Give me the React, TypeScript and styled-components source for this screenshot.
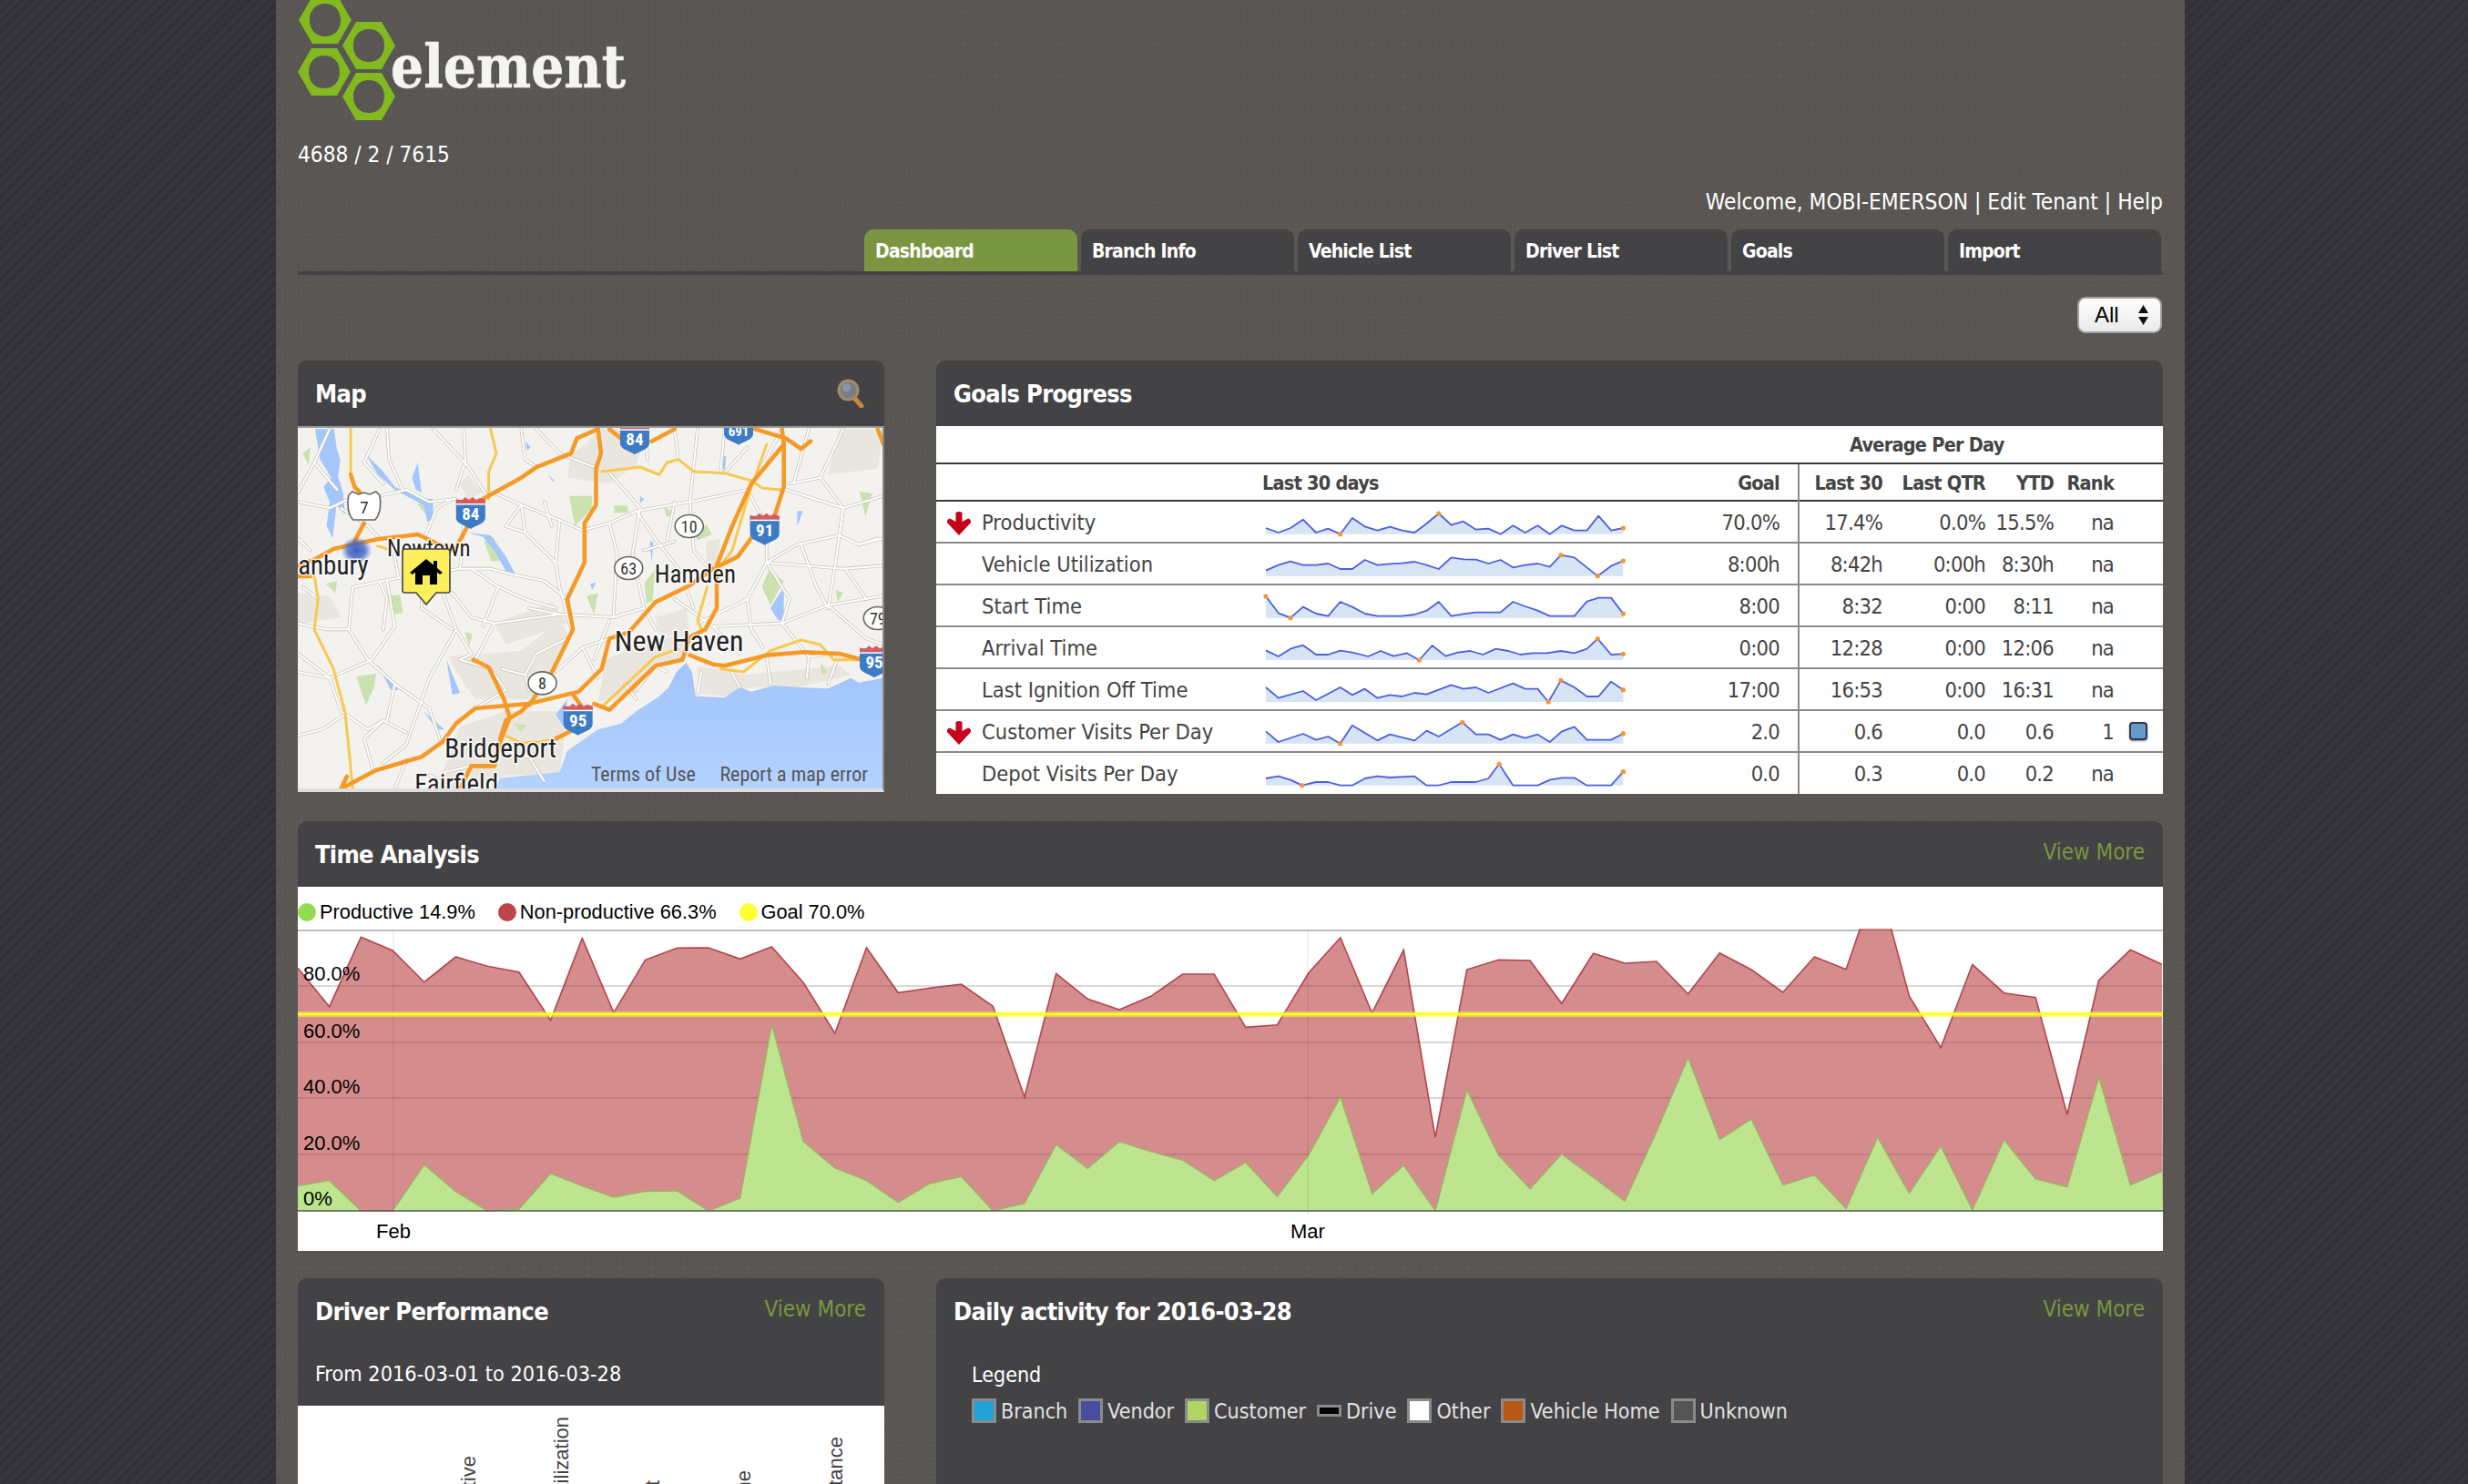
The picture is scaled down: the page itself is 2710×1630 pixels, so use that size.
import React from "react";
import styled, { createGlobalStyle } from "styled-components";

const UI = `"DejaVu Sans Condensed", "DejaVu Sans", sans-serif`;
const ARIAL = `"Liberation Sans", Arial, sans-serif`;

const Global = createGlobalStyle`
  html, body { margin: 0; padding: 0; height: 1630px; overflow: hidden; background: #35333b; }
  #root { height: 1630px; }
  * { box-sizing: border-box; }
`;

const Page = styled.div`
  width: 2710px;
  height: 1630px;
  overflow: hidden;
  font-family: ${UI};
  font-stretch: condensed;
  background-color: #35333b;
  background-image: repeating-linear-gradient(135deg, #312f37 0 3px, #36343c 3px 8px);
`;
const Column = styled.div`
  width: 2096px;
  height: 1630px;
  margin-left: 303px;
  padding: 0 24px;
  background-color: #595653;
  background-image:
    radial-gradient(rgba(255,255,255,.025) 1px, transparent 1px),
    radial-gradient(rgba(0,0,0,.05) 1px, transparent 1px);
  background-size: 5px 5px, 7px 7px;
  overflow: hidden;
`;
const Logo = styled.svg`
  display: block;
  width: 361px;
  height: 132px;
`;
const IdLine = styled.div`
  margin-top: 23px;
  height: 30px;
  line-height: 30px;
  font-size: 24.2px;
  color: #fff;
`;
const Welcome = styled.div`
  margin-top: 22px;
  height: 30px;
  line-height: 30px;
  font-size: 24.3px;
  color: #fff;
  text-align: right;
`;
const Tabs = styled.nav`
  margin-top: 15px;
  height: 50px;
  display: flex;
  justify-content: flex-end;
  gap: 4px;
  padding-right: 2px;
  border-bottom: 4px solid #434244;
`;
const Tab = styled.div<{ $active?: boolean }>`
  width: 234px;
  height: 46px;
  padding-left: 12px;
  line-height: 49px;
  border-radius: 10px 10px 0 0;
  font-size: 21px;
  letter-spacing: -0.8px;
  font-weight: 700;
  color: #fff;
  background: ${(p) => (p.$active ? "#7a9640" : "#434244")};
`;
const SelectRow = styled.div`
  margin-top: 24px;
  display: flex;
  justify-content: flex-end;
  padding-right: 1px;
`;
const SelectBox = styled.div`
  width: 93px;
  height: 40px;
  display: flex;
  align-items: center;
  justify-content: space-between;
  padding: 0 12px 0 17px;
  border: 2px solid #a2a2a2;
  border-radius: 9px;
  background: linear-gradient(#ffffff, #e9e9e9);
  font-family: ${ARIAL};
  font-size: 24px;
  color: #000;
`;
const Arrows = styled.svg`
  width: 13px;
  height: 24px;
`;
const Split = styled.div<{ $top?: number }>`
  margin-top: ${(p) => p.$top ?? 30}px;
  display: flex;
  align-items: flex-start;
  gap: 57px;
`;
const Panel = styled.section<{ $width?: number }>`
  ${(p) => (p.$width ? `width:${p.$width}px;flex:none;` : "flex:1;min-width:0;")}
  border-radius: 10px 10px 0 0;
  background: #434244;
  overflow: hidden;
`;
const Head = styled.header`
  height: 72px;
  padding: 0 20px;
  display: flex;
  align-items: center;
  justify-content: space-between;
`;
const Title = styled.h2`
  margin: 0 0 0 -1px;
  font-size: 27px;
  letter-spacing: -0.7px;
  font-weight: 700;
  color: #fff;
`;
const ViewMore = styled.a`
  margin-top: -5px;
  font-size: 24px;
  color: #7a9640;
`;
const MapFrame = styled.div`
  height: 402px;
  border-top: 2px solid #999;
  border-right: 2px solid #8a8a8a;
  border-bottom: 4px solid #dedede;
  background: #f3f1ee;
`;
const MapSvg = styled.svg`
  display: block;
  width: 642px;
  height: 396px;
`;
const LensIcon = styled.svg`
  width: 30px;
  height: 32px;
  margin-right: 2px;
`;
const Table = styled.div`
  background: #fff;
  color: #444;
  font-size: 23.5px;
`;
const CapRow = styled.div`
  height: 42px;
  border-bottom: 2px solid #3a3a3c;
  padding-left: 1003px;
  width: 100%;
  line-height: 41px;
  font-size: 21.5px;
  letter-spacing: -0.75px;
  font-weight: 700;
`;
const Row = styled.div<{ $head?: boolean; $last?: boolean }>`
  height: ${(p) => (p.$head ? 41 : p.$last ? 45 : 46)}px;
  display: grid;
  grid-template-columns: 50px 308px 420px 168px 93px 113px 75px 66px 1fr;
  border-bottom: ${(p) =>
    p.$last ? "none" : p.$head ? "2px solid #3a3a3c" : "2px solid #8a8a8a"};
  line-height: ${(p) => (p.$head ? 41 : 46)}px;
  font-weight: ${(p) => (p.$head ? 700 : 400)};
  font-size: ${(p) => (p.$head ? 21.5 : 23.5)}px;
  letter-spacing: ${(p) => (p.$head ? "-0.75px" : "0")};
`;
const Cell = styled.div`
  white-space: nowrap;
  position: relative;
`;
const Num = styled(Cell)`
  text-align: right;
`;
const Figure = styled.span`
  letter-spacing: -0.75px;
`;
const GoalCell = styled(Num)`
  padding-right: 20px;
`;
const Divided = styled(Num)`
  border-left: 2px solid #8a8a8a;
`;
const ArrowIcon = styled.svg`
  position: absolute;
  left: 11px;
  top: 10px;
  width: 28px;
  height: 27px;
`;
const Spark = styled.svg`
  position: absolute;
  left: 0;
  top: 0;
  width: 408px;
  height: 46px;
  overflow: visible;
`;
const RankSquare = styled.span`
  display: block;
  margin: 12px 0 0 17px;
  width: 20px;
  height: 20px;
  border: 2px solid #2f3b48;
  border-radius: 4px;
  background: #6699cc;
  box-shadow: 0 1px 2px rgba(0,0,0,.5);
`;
const ChartBody = styled.div`
  height: 400px;
  background: #fff;
`;
const ChartLegend = styled.div`
  height: 44px;
  padding-top: 12px;
  display: flex;
  align-items: center;
  gap: 25px;
  font-family: ${ARIAL};
  font-size: 21.8px;
  color: #000;
`;
const LegendEntry = styled.span`
  display: flex;
  align-items: center;
  gap: 4px;
`;
const Dot = styled.i<{ $color: string }>`
  width: 20px;
  height: 20px;
  border-radius: 50%;
  background: ${(p) => p.$color};
`;
const Plot = styled.svg`
  display: block;
  width: 2048px;
  height: 356px;
`;
const SubHead = styled.div`
  height: 68px;
  padding: 0 19px;
  font-size: 23.3px;
  line-height: 66px;
  color: #fff;
`;
const WhiteBlock = styled.div`
  height: 100px;
  background: #fff;
`;
const Bars = styled.svg`
  display: block;
  width: 644px;
  height: 100px;
`;
const DailyBody = styled.div`
  height: 300px;
  padding: 16px 39px;
  color: #e2e2e2;
  font-size: 23.1px;
`;
const LegendLabel = styled.div`
  height: 36px;
  line-height: 36px;
  color: #fff;
`;
const DailyLegend = styled.div`
  margin-top: 8px;
  display: flex;
  align-items: center;
  height: 27px;
  gap: 12px;
`;
const DailyEntry = styled.span`
  display: flex;
  align-items: center;
  gap: 5px;
`;
const Swatch = styled.i<{ $color: string; $short?: boolean }>`
  width: 27px;
  height: ${(p) => (p.$short ? 13 : 27)}px;
  border: 3px solid #8a8a8a;
  background: ${(p) => p.$color};
`;

/* ---------- data ---------- */
type P = [number, number];
const spark = (s: string): P[] =>
  s.trim().split(/\s+/).map((t) => t.split(":").map(Number) as P);

const goalRows = [
  { name: "Productivity", down: true, base: 590, g: "70.0%", l: "17.4%", q: "0.0%", y: "15.5%", r: "na",
    pts: "725:570 752:585 778:570 805:542 833:585 859:572 885:590 911:537 938:565 965:578 992:566 1018:578 1045:585 1071:555 1097:522 1124:560 1150:548 1177:575 1204:572 1230:590 1257:562 1283:585 1310:562 1336:590 1362:562 1389:578 1416:578 1441:530 1468:578 1494:570" },
  { name: "Vehicle Utilization", base: 728, g: "8:00h", l: "8:42h", q: "0:00h", y: "8:30h", r: "na",
    pts: "725:710 752:692 778:680 805:692 833:692 859:687 885:705 911:705 938:675 965:692 992:688 1018:686 1045:681 1071:692 1097:705 1124:667 1150:673 1177:674 1204:687 1230:675 1257:700 1283:692 1310:687 1336:698 1360:659 1389:667 1416:700 1439:728 1468:695 1494:678" },
  { name: "Start Time", base: 866, g: "8:00", l: "8:32", q: "0:00", y: "8:11", r: "na",
    pts: "725:795 752:850 778:866 805:830 833:852 859:860 885:813 911:830 938:852 965:860 992:860 1018:860 1045:855 1071:842 1097:813 1124:860 1150:853 1177:848 1204:848 1230:848 1257:813 1283:828 1310:842 1336:860 1362:860 1389:860 1416:812 1441:800 1468:800 1494:852" },
  { name: "Arrival Time", base: 1005, g: "0:00", l: "12:28", q: "0:00", y: "12:06", r: "na",
    pts: "725:973 752:993 778:968 805:956 833:987 859:987 885:974 911:980 945:993 972:975 1000:992 1028:982 1055:1005 1083:957 1112:992 1138:980 1165:975 1192:987 1220:968 1247:975 1273:987 1300:982 1330:982 1360:975 1389:982 1416:968 1439:935 1468:987 1494:985" },
  { name: "Last Ignition Off Time", base: 1143, g: "17:00", l: "16:53", q: "0:00", y: "16:31", r: "na",
    pts: "725:1095 752:1130 805:1107 833:1137 885:1095 911:1120 938:1100 965:1130 992:1120 1018:1125 1045:1113 1071:1118 1124:1087 1150:1100 1177:1095 1204:1113 1257:1082 1283:1100 1310:1100 1333:1143 1360:1072 1389:1095 1416:1125 1441:1125 1468:1076 1494:1103" },
  { name: "Customer Visits Per Day", down: true, base: 1280, g: "2.0", l: "0.6", q: "0.0", y: "0.6", r: "1", sq: true,
    pts: "725:1240 752:1275 805:1248 833:1268 859:1257 885:1280 911:1220 965:1270 992:1250 1045:1270 1071:1238 1097:1257 1148:1210 1177:1250 1204:1250 1230:1268 1257:1250 1283:1262 1310:1250 1336:1275 1362:1240 1389:1225 1416:1268 1468:1268 1494:1247" },
  { name: "Depot Visits Per Day", base: 1418, g: "0.0", l: "0.3", q: "0.0", y: "0.2", r: "na",
    pts: "725:1395 752:1388 778:1400 803:1418 833:1407 859:1407 885:1418 911:1418 938:1395 965:1388 992:1392 1045:1388 1071:1418 1097:1418 1124:1407 1177:1407 1204:1395 1227:1348 1257:1418 1310:1418 1336:1400 1362:1393 1389:1393 1416:1418 1468:1418 1494:1373" },
];

const red1 = [490,617,388,432,536,453,484,503,662,392,637,463,424,423,460,420,538,705,423,571,556,543,616];
const red2 = [735,328,412,447,403,330,330,505,497,325,210,458,250,868,315,283,285,427,262,294,288,395,260,315,390,273,314,13,402,572,298,392,407,792,350,250,298];
const grn1 = [1208,1190,1290,1290,1138,1227,1290,1284,1167,1208,1245,1226,1224,1290,1248,677,1062,1149,1190,1262,1200,1177,1290];
const grn2 = [1085,892,970,882,915,943,1010,950,1063,925,735,1053,960,1110,712,927,1037,923,1000,1078,850,605,875,808,1025,992,1103,868,1052,897,1108,877,1005,1031,670,1025,980];
const toY = (a: number[], b: number[]) => [
  ...a.map((y) => 900 + y / 3 - 1018),
  ...b.map((y) => 960 + y / 3 - 1018),
];
const STEP = 2047 / 59;
const BASE = 312;
const area = (ys: number[]) => {
  const pts = ys.map((y, i) => `${(i * STEP).toFixed(1)},${y.toFixed(1)}`);
  return { line: pts.join(" "), fill: `0,${BASE} ${pts.join(" ")} 2048,${BASE}` };
};
const redA = area(toY(red1, red2));
const grnA = area(toY(grn1, grn2));

/* ---------- map ---------- */
const highways = [
  "17,690 60,670 110,635 160,620 225,603 330,587 385,620 430,640",
  "460,560 430,630",
  "500,470 600,400 640,365 730,320 745,270 800,240",
  "800,240 808,320 795,370 795,490 765,550 765,680 720,800 735,900 700,990 680,1040 620,1150",
  "1285,290 1200,420 1150,560 1110,690",
  "1285,290 1285,430 1260,530",
  "1205,590 1165,660 1110,695 1110,830 1080,900 1040,925 1020,1000 950,1020 830,1165 790,1145",
  "1100,700 1040,755 950,810 880,910 830,930 810,1030 750,1105 620,1145 480,1160 430,1210 395,1270 340,1320 220,1365 130,1425",
  "1040,985 1100,1015 1130,1020 1240,985 1340,975 1430,980 1490,1000",
  "475,1000 515,1025 555,1130 570,1190 545,1270 530,1350 470,1350 440,1425",
  "620,1145 600,1170 560,1200 545,1260",
  "735,1115 755,1150",
  "690,1260 745,1225",
  "830,240 870,280", "940,280 1000,240", "1210,240 1290,270 1330,305 1355,280", "1280,240 1285,290",
  "155,390 165,430 180,450", "190,550 165,610", "130,1425 145,1385",
  "17,725 50,725", "1530,240 1545,290",
];
const yellows = [
  "155,240 155,390",
  "520,240 535,320 515,380 515,470",
  "810,380 910,365 960,390 980,350 1010,340 1050,380 1130,385 1200,410 1230,435 1280,440",
  "1240,290 1190,470 1150,640 1120,690",
  "1085,760 1060,870 1070,900",
  "60,720 70,800 60,900 110,1030 140,1170 150,1290 160,1425",
  "815,1150 950,990 1010,965",
  "1120,1030 1180,1040 1250,970 1330,935 1380,950 1415,1000 1480,1000",
  "560,1250 600,1275 650,1270 690,1260",
  "225,625 250,635",
];
const whites = [
  "17,480 100,500 150,470", "230,460 300,440 360,480 430,470", "250,240 255,340 290,440",
  "370,240 460,360 510,460", "530,450 600,490 610,580 690,680 700,760 730,900",
  "450,360 430,440", "600,490 700,540 770,580", "770,570 830,550 900,510 1040,480 1190,440",
  "820,370 910,500 890,650 920,830 950,900", "1060,240 1040,480 1050,640 1090,700",
  "1290,440 1440,500 1545,460", "1440,500 1430,590 1320,620 1240,680 1190,800 1060,880",
  "1240,680 1440,700 1545,690", "1440,240 1380,400 1440,500", "1440,500 1420,680 1400,830",
  "1280,880 1400,820 1545,790", "1280,880 1350,990 1345,1060", "1100,890 1280,880",
  "920,830 840,860 700,850 530,880 480,1000", "390,760 430,900 360,1060 300,1280 240,1340",
  "17,1040 100,1060 210,1000 270,890 250,740", "150,900 200,1000 270,1080 360,1160",
  "150,900 160,760 280,730 440,700 520,700 580,720 660,740 720,800", "17,1250 80,1230 140,1180",
  "215,1370 190,1260 240,1200 300,1240", "420,900 340,830 340,740", "720,930 640,980 610,1050 620,1100",
  "830,870 790,1000", "17,600 50,640", "100,240 60,350 17,450", "600,240 610,340 640,365",
  "640,240 700,320", "1130,240 1120,385", "1350,240 1310,420", "1530,600 1480,620 1430,590",
  "1000,800 1100,890", "30,760 70,800", "560,1100 480,1160", "440,700 450,560", "680,560 660,480",
  "900,1100 950,1020 980,1040", "1070,1040 1060,1110", "1140,1020 1170,1090", "1240,985 1250,1080",
  "1430,980 1400,1080", "920,640 1000,610", "300,1330 270,1425", "360,1380 420,1425",
  "130,500 200,560 230,600", "230,740 250,800 240,900", "340,740 420,780 470,860 530,880",
  "470,700 540,760 610,800 690,830", "540,760 500,890", "600,490 560,560 610,580", "700,540 690,680",
  "830,550 850,650 840,860", "900,510 960,620 1010,700 1050,830", "1000,480 980,610",
  "1190,440 1240,560 1240,680", "1240,680 1300,800 1280,880", "1330,620 1370,760 1400,830",
  "1445,700 1500,800", "1400,820 1500,930 1545,950", "1350,990 1430,980", "1190,800 1200,900 1230,960",
  "1100,890 1170,980", "280,730 260,600", "350,590 380,500 420,470", "17,880 90,900 150,900",
  "17,980 100,1060 130,1170", "130,1170 200,1230 240,1200", "360,1160 390,1270", "430,900 470,980 440,1000",
  "270,1080 250,1200", "560,1100 520,1030 440,1000", "610,1050 550,1030", "690,1040 760,960 830,930",
  "760,960 800,1060", "560,1300 620,1320 660,1400", "400,1370 470,1350", "620,830 700,850",
  "870,1080 900,1130", "1280,240 1230,360", "1380,400 1300,420", "1480,620 1545,600",
  "60,350 120,440", "230,240 190,350 240,420", "450,240 455,360", "700,320 800,370", "920,240 930,340",
  "1000,240 1010,340", "1130,385 1190,300",
];
const tan = [
  "410,990 600,970 700,870 730,930 690,1040 620,1130 480,1130 430,1040",
  "530,880 680,810 720,880 560,950",
  "810,240 930,240 900,360 830,420 720,400 730,330",
  "460,390 500,450 460,470 440,420",
  "17,780 100,790 130,860 17,880",
  "820,1000 950,930 1040,920 1030,990 950,1030 900,1110 800,1140",
  "1060,1020 1180,1050 1430,1020 1460,1050 1320,1090 1200,1090 1130,1120 1060,1110",
  "1430,240 1545,240 1530,370 1400,390",
  "1080,610 1120,600 1110,700 1085,690",
  "440,1220 560,1170 720,1170 700,1380 560,1380 480,1425 380,1425",
  "950,860 1030,830 1040,920 960,920",
];
const green = [
  "725,460 785,460 785,500 740,560", "170,1055 222,1045 215,1095 195,1150", "248,790 283,785 292,845 267,850",
  "328,485 358,485 358,530", "503,612 528,595 552,675 522,675", "1052,582 1083,555 1098,588 1060,606",
  "1245,705 1285,740 1250,820 1228,760", "1482,445 1515,452 1498,530", "842,492 878,492 878,516 842,516",
  "970,490 1000,520 980,530", "922,745 948,705 943,805 926,815", "30,320 50,300 45,360",
  "770,790 800,780 790,850", "452,907 473,916 464,955", "90,750 120,740 115,780", "1380,1010 1400,1040 1385,1050",
  "1420,770 1440,780 1425,810", "580,1210 615,1215 600,1240",
];
const water = [
  "62,240 112,240 118,300 128,345 122,395 135,450 140,520 118,490 108,600 92,560 100,480 84,430 104,400 75,340",
  "185,300 200,330 240,380 270,430 345,470 370,470 370,540 355,545 345,490 270,440 225,390",
  "315,400 330,350 340,450 325,440", "610,280 625,300 615,310", "405,1000 440,1110 420,1115",
  "225,1015 280,1100 260,1100", "1250,830 1285,760 1285,870 1270,870", "1320,510 1335,510 1320,560",
  "460,580 520,590 560,660 585,720 565,720 530,640 500,595", "1120,330 1135,330 1130,385",
  "670,390 690,415 680,410", "910,460 920,470 910,485", "345,1170 400,1230 380,1230",
  "690,1180 720,1130 710,1220", "935,610 945,610 940,680", "780,750 795,745 785,770",
];
const sea =
  "530,1428 545,1390 700,1370 720,1300 800,1230 860,1210 900,1170 960,1120 985,1090 1005,1040 1030,1010 1045,1040 1055,1120 1130,1125 1170,1090 1200,1105 1260,1085 1320,1090 1400,1095 1460,1060 1480,1075 1545,1060 1545,1428";

const px = (x: number) => (x - 17) * 0.4209;
const py = (y: number) => (y - 236) / 3;

const Lines = ({ list, color, width }: { list: string[]; color: string; width: number }) => (
  <>
    {list.map((d) => (
      <polyline key={d} points={d} fill="none" stroke={color} strokeWidth={width}
        strokeLinejoin="round" strokeLinecap="round" vectorEffect="non-scaling-stroke" />
    ))}
  </>
);

const Interstate = ({ x, y, n, small }: { x: number; y: number; n: string; small?: boolean }) => (
  <g transform={`translate(${px(x)},${py(y)})`}>
    <path d="M-16,-14 L-16,6 C-16,12 -6,14 0,18 C6,14 16,12 16,6 L16,-14 Z" fill="#3c7bc6" />
    <path d="M-16,-10 L-16,-15 L-10,-13 L-6,-17 L-2,-14 L2,-17 L6,-14 L10,-16 L16,-14 L16,-10 Z" fill="#d9595c" />
    <rect x="-16" y="-10" width="32" height="1.5" fill="#fff" />
    <text x="0" y="8" textAnchor="middle" fontFamily="Roboto, sans-serif" fontWeight="700" fontSize={small ? 15 : 19} fill="#fff">{n}</text>
  </g>
);
const Route = ({ x, y, n }: { x: number; y: number; n: string }) => (
  <g transform={`translate(${px(x)},${py(y)})`}>
    <ellipse cx="0" cy="0" rx="15.5" ry="12.5" fill="#fff" stroke="#666" strokeWidth="1.6" />
    <text x="0" y="6.5" textAnchor="middle" fontFamily="Roboto, sans-serif" fontSize="18" fill="#333">{n}</text>
  </g>
);
const Place = ({ x, y, size, children }: { x: number; y: number; size: number; children: string }) => (
  <text x={px(x)} y={py(y)} fontFamily="Roboto, sans-serif" fontSize={size} fill="#222"
    stroke="rgba(255,255,255,.75)" strokeWidth="3" paintOrder="stroke">{children}</text>
);

const MapDrawing = () => (
  <MapSvg viewBox="0 0 642 396">
    <defs>
      <radialGradient id="dan">
        <stop offset="0" stopColor="#3f63c4" />
        <stop offset=".55" stopColor="#3f63c4" stopOpacity=".8" />
        <stop offset="1" stopColor="#3f63c4" stopOpacity="0" />
      </radialGradient>
      <linearGradient id="seaG" x1="0" y1="0" x2="0" y2="1">
        <stop offset="0" stopColor="#a1c4fb" />
        <stop offset="1" stopColor="#b3d2ff" />
      </linearGradient>
    </defs>
    <rect width="642" height="396" fill="#f4f2ef" />
    <g transform="scale(0.4209 0.33333) translate(-17 -236)">
      {tan.map((d) => <polygon key={d} points={d} fill="#e9e6df" />)}
      {green.map((d) => <polygon key={d} points={d} fill="#cbe2b0" />)}
      {water.map((d) => <polygon key={d} points={d} fill="#a3c7fb" />)}
      <polygon points={sea} fill="url(#seaG)" />
      <Lines list={whites} color="#cbc7be" width={3.6} />
      <Lines list={whites} color="#ffffff" width={2} />
      <Lines list={yellows} color="#f8c850" width={3} />
      <Lines list={highways} color="#f59a27" width={4.6} />
    </g>
    <ellipse cx={px(170)} cy={py(640)} rx="17" ry="15" fill="url(#dan)" />
    <Place x={-22} y={718} size={29}>Danbury</Place>
    <Place x={250} y={658} size={25}>Newtown</Place>
    <Place x={948} y={746} size={27}>Hamden</Place>
    <Place x={843} y={972} size={32}>New Haven</Place>
    <Place x={400} y={1322} size={29.5}>Bridgeport</Place>
    <Place x={322} y={1438} size={29}>Fairfield</Place>
    <text x={px(782)} y={py(1401)} fontFamily="Roboto, sans-serif" fontSize="22" fill="#555">Terms of Use</text>
    <text x={px(1118)} y={py(1401)} fontFamily="Roboto, sans-serif" fontSize="22" fill="#555">Report a map error</text>
    <Interstate x={468} y={515} n="84" />
    <Interstate x={896} y={270} n="84" />
    <Interstate x={1167} y={238} n="691" small />
    <Interstate x={1235} y={568} n="91" />
    <Interstate x={748} y={1195} n="95" />
    <Interstate x={1521} y={1005} n="95" />
    <Route x={1038} y={560} n="10" />
    <Route x={880} y={698} n="63" />
    <Route x={655} y={1077} n="8" />
    <Route x={1530} y={863} n="79" />
    <g transform={`translate(${px(190)},${py(497)})`}>
      <path d="M-17,-13 L-13,-17 L-6,-14 L0,-16 L6,-14 L13,-17 L17,-13 C19,-4 18,8 12,14 L-12,14 C-18,8 -19,-4 -17,-13 Z" fill="#fff" stroke="#666" strokeWidth="1.6" />
      <text x="0" y="7" textAnchor="middle" fontFamily="Roboto, sans-serif" fontSize="19" fill="#333">7</text>
    </g>
    <g transform={`translate(${px(352)},${py(635)})`}>
      <path d="M-26,3 Q-26,0 -23,0 L23,0 Q26,0 26,3 L26,46 Q26,48 23,48 L11,48 L0,61 L-11,48 L-23,48 Q-26,48 -26,46 Z"
        fill="#fdee5b" stroke="#444" strokeWidth="1.6" />
      <path d="M0,11 L-18,26 L-15,28 L-12,25.5 L-12,39 L-4,39 L-4,29 L4,29 L4,39 L12,39 L12,25.5 L15,28 L18,26 L12,21 L12,13 L8,13 L8,17.5 Z" fill="#000" />
    </g>
  </MapSvg>
);

const Magnifier = () => (
  <LensIcon viewBox="0 0 30 32">
    <path d="M19,21 L27,30" stroke="#c98a3a" strokeWidth="5" strokeLinecap="round" />
    <circle cx="12.5" cy="12.5" r="10.5" fill="#767f8b" stroke="#a58b65" strokeWidth="3" />
    <circle cx="10.5" cy="9.5" r="4.5" fill="#8d96a2" />
  </LensIcon>
);

const DownArrow = () => (
  <ArrowIcon viewBox="0 0 28 27">
    <path d="M10.5,2 Q14,0 17.5,2 L17.5,12 L24,8.5 Q27.5,9 27,13 L14,27 L1,13 Q0.5,9 4,8.5 L10.5,12 Z" fill="#c5001a" />
  </ArrowIcon>
);

const SparkLine = ({ pts, base, rowIndex }: { pts: string; base: number; rowIndex: number }) => {
  const top = 551 + 46 * rowIndex;
  const raw = spark(pts);
  const xy = raw.map(([x, y]) => [(x - 725) / 1.96 + 4, 390 + y / 3 - top] as P);
  const ys = raw.map((p) => p[1]);
  const marks = new Set([ys.indexOf(Math.min(...ys)), ys.indexOf(Math.max(...ys)), raw.length - 1]);
  const b = 390 + base / 3 - top;
  const line = xy.map((p) => p.join(",")).join(" ");
  return (
    <Spark viewBox="0 0 408 46">
      <polygon points={`${xy[0][0]},${b} ${line} ${xy[xy.length - 1][0]},${b}`} fill="#d7e4f3" />
      <polyline points={line} fill="none" stroke="#4a5fe3" strokeWidth="1.8" strokeLinejoin="round" />
      {[...marks].map((i) => <circle key={i} cx={xy[i][0]} cy={xy[i][1]} r="2.6" fill="#f79533" />)}
    </Spark>
  );
};

const Brand = () => (
  <Logo viewBox="0 0 361 132">
    {[[30, 22], [78, 50], [29, 79], [78, 106]].map(([cx, cy]) => (
      <path key={`${cx}-${cy}`} fillRule="evenodd" fill="#82b91e"
        d={`M${cx - 29},${cy} L${cx - 14},${cy - 26} L${cx + 14},${cy - 26} L${cx + 29},${cy} L${cx + 14},${cy + 26} L${cx - 14},${cy + 26} Z
            M${cx - 17},${cy} C${cx - 17},${cy - 11} ${cx - 10},${cy - 18} ${cx},${cy - 18} C${cx + 10},${cy - 18} ${cx + 17},${cy - 11} ${cx + 17},${cy} C${cx + 17},${cy + 11} ${cx + 10},${cy + 18} ${cx},${cy + 18} C${cx - 10},${cy + 18} ${cx - 17},${cy + 11} ${cx - 17},${cy} Z`} />
    ))}
    <text x="102" y="96" fontFamily={`"DejaVu Serif Condensed", "DejaVu Serif", serif`} fontWeight="700" fontSize="66"
      fill="#f4f4f2" stroke="#f4f4f2" strokeWidth=".6" textLength="258" lengthAdjust="spacingAndGlyphs">element</text>
  </Logo>
);

const tabs = ["Dashboard", "Branch Info", "Vehicle List", "Driver List", "Goals", "Import"];
const legendItems: [string, string, boolean?][] = [
  ["Branch", "#23a0d8"], ["Vendor", "#4a4c9e"], ["Customer", "#b2d465"], ["Drive", "#000", true],
  ["Other", "#fff"], ["Vehicle Home", "#b95715"], ["Unknown", "#555557"],
];
const barLabels: [string, number, number][] = [
  ["Productive", 195, 55], ["Vehicle Utilization", 297, 12], ["Customer Visit", 397, 82], ["Start Time", 497, 71], ["Distance", 598, 34],
];

export default function App() {
  return (
    <Page>
      <Global />
      <Column>
        <Brand />
        <IdLine>4688 / 2 / 7615</IdLine>
        <Welcome>Welcome, MOBI-EMERSON | Edit Tenant | Help</Welcome>
        <Tabs>
          {tabs.map((t, i) => <Tab key={t} $active={i === 0}>{t}</Tab>)}
        </Tabs>
        <SelectRow>
          <SelectBox>
            All
            <Arrows viewBox="0 0 13 24">
              <path d="M6.5,1 L12,10 L1,10 Z M6.5,23 L12,14 L1,14 Z" fill="#111" />
            </Arrows>
          </SelectBox>
        </SelectRow>

        <Split>
          <Panel $width={644}>
            <Head>
              <Title>Map</Title>
              <Magnifier />
            </Head>
            <MapFrame><MapDrawing /></MapFrame>
          </Panel>
          <Panel>
            <Head><Title>Goals Progress</Title></Head>
            <Table>
              <CapRow>Average Per Day</CapRow>
              <Row $head>
                <Cell /><Cell /><Cell>Last 30 days</Cell>
                <GoalCell>Goal</GoalCell>
                <Divided>Last 30</Divided><Num>Last QTR</Num><Num>YTD</Num><Num>Rank</Num><Cell />
              </Row>
              {goalRows.map((r, i) => (
                <Row key={r.name} $last={i === goalRows.length - 1}>
                  <Cell>{r.down && <DownArrow />}</Cell>
                  <Cell>{r.name}</Cell>
                  <Cell><SparkLine pts={r.pts} base={r.base} rowIndex={i} /></Cell>
                  <GoalCell><Figure>{r.g}</Figure></GoalCell>
                  <Divided><Figure>{r.l}</Figure></Divided>
                  <Num><Figure>{r.q}</Figure></Num>
                  <Num><Figure>{r.y}</Figure></Num>
                  <Num><Figure>{r.r}</Figure></Num>
                  <Cell>{r.sq && <RankSquare />}</Cell>
                </Row>
              ))}
            </Table>
          </Panel>
        </Split>

        <Split>
          <Panel>
            <Head><Title>Time Analysis</Title><ViewMore>View More</ViewMore></Head>
            <ChartBody>
              <ChartLegend>
                <LegendEntry><Dot $color="#93dc52" />Productive 14.9%</LegendEntry>
                <LegendEntry><Dot $color="#bd4449" />Non-productive 66.3%</LegendEntry>
                <LegendEntry><Dot $color="#ffff33" />Goal 70.0%</LegendEntry>
              </ChartLegend>
              <Plot viewBox="0 0 2048 356" fontFamily={ARIAL}>
                <defs>
                  <clipPath id="plotClip"><rect x="0" y="2" width="2048" height="312" /></clipPath>
                </defs>
                <line x1="0" x2="2048" y1="4" y2="4" stroke="#aaa" strokeWidth="1.5" />
                {[65, 127, 188, 250].map((y) => (
                  <line key={y} x1="0" x2="2048" y1={y} y2={y} stroke="#d8d8d8" strokeWidth="1.5" />
                ))}
                <g clipPath="url(#plotClip)">
                  <polygon points={redA.fill} fill="#bd4e50" fillOpacity=".65" />
                  <polyline points={redA.line} fill="none" stroke="#b5434b" strokeWidth="1.6" />
                  {[65, 127, 188, 250].map((y) => (
                    <line key={y} x1="0" x2="2048" y1={y} y2={y} stroke="#000" strokeOpacity=".06" strokeWidth="1.5" />
                  ))}
                  <polygon points={grnA.fill} fill="#bbe78e" fillOpacity=".96" />
                  <polyline points={grnA.line} fill="none" stroke="#98b763" strokeWidth="1.3" />
                </g>
                {[105, 1109].map((x) => (
                  <line key={x} x1={x} x2={x} y1="4" y2="316" stroke="#000" strokeOpacity=".12" strokeWidth="1" />
                ))}
                <line x1="0" x2="2048" y1="96" y2="96" stroke="#ffff33" strokeOpacity=".5" strokeWidth="6" />
                <line x1="0" x2="2048" y1="96" y2="96" stroke="#ffff20" strokeWidth="2.5" />
                <line x1="0" x2="2048" y1="312" y2="312" stroke="#555" strokeWidth="1.5" />
                {([["80.0%", 59], ["60.0%", 122], ["40.0%", 183], ["20.0%", 245], ["0%", 306]] as [string, number][]).map(([t, y]) => (
                  <text key={t} x="6" y={y} fontSize="22" fill="#000">{t}</text>
                ))}
                <text x="105" y="342" fontSize="22" textAnchor="middle" fill="#000">Feb</text>
                <text x="1109" y="342" fontSize="22" textAnchor="middle" fill="#000">Mar</text>
              </Plot>
            </ChartBody>
          </Panel>
        </Split>

        <Split>
          <Panel $width={644}>
            <Head><Title>Driver Performance</Title><ViewMore>View More</ViewMore></Head>
            <SubHead>From 2016-03-01 to 2016-03-28</SubHead>
            <WhiteBlock>
              <Bars viewBox="0 0 644 100" fontFamily={ARIAL} fontSize="22" fill="#444">
                {barLabels.map(([t, x, y]) => (
                  <text key={t} transform={`translate(${x},${y}) rotate(-90)`} textAnchor="end">{t}</text>
                ))}
              </Bars>
            </WhiteBlock>
          </Panel>
          <Panel>
            <Head><Title>Daily activity for 2016-03-28</Title><ViewMore>View More</ViewMore></Head>
            <DailyBody>
              <LegendLabel>Legend</LegendLabel>
              <DailyLegend>
                {legendItems.map(([name, c, short]) => (
                  <DailyEntry key={name}><Swatch $color={c} $short={short} />{name}</DailyEntry>
                ))}
              </DailyLegend>
            </DailyBody>
          </Panel>
        </Split>
      </Column>
    </Page>
  );
}
